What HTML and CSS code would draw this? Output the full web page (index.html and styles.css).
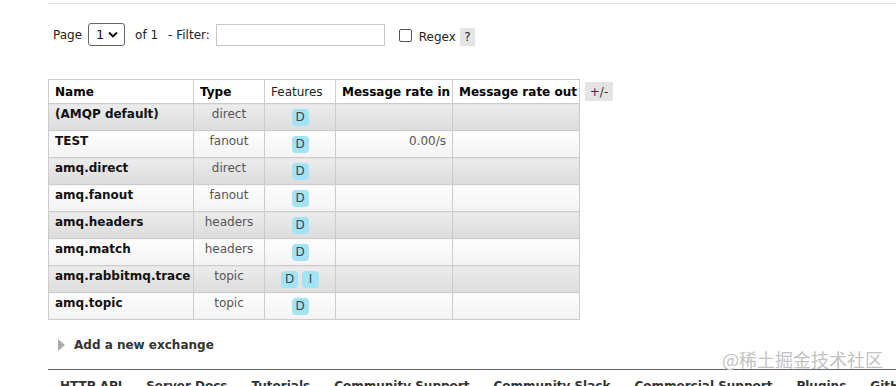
FILE: index.html
```html
<!DOCTYPE html>
<html>
<head>
<meta charset="utf-8">
<title>Exchanges</title>
<link rel="stylesheet" href="styles.css">
</head>
<body>
<div class="main">
  <div class="rule-top"></div>
  <div class="filter-bar">
    <span class="lbl">Page</span>
    <span class="select">1 <svg width="10" height="7" viewBox="0 0 10 7"><path d="M1 1.5 L5 5.5 L9 1.5" fill="none" stroke="#111" stroke-width="1.8"/></svg></span>
    <span class="lbl of">of 1</span>
    <span class="lbl">- Filter:</span>
    <span class="input"></span>
    <span class="check"></span>
    <span class="lbl regex">Regex</span>
    <span class="help">?</span>
  </div>
  <div class="table-wrap">
    <table class="list">
      <colgroup>
        <col class="w-name"><col class="w-type"><col class="w-feat"><col class="w-in"><col class="w-out">
      </colgroup>
      <thead>
        <tr>
          <th>Name</th>
          <th>Type</th>
          <th class="c-feat">Features</th>
          <th>Message rate in</th>
          <th>Message rate out</th>
        </tr>
      </thead>
      <tbody>
        <tr class="alt1"><td class="c-name">(AMQP default)</td><td class="c-type">direct</td><td class="c-feat"><span class="badge">D</span></td><td class="c-in"></td><td class="c-out"></td></tr>
        <tr class="alt2"><td class="c-name">TEST</td><td class="c-type">fanout</td><td class="c-feat"><span class="badge">D</span></td><td class="c-in">0.00/s</td><td class="c-out"></td></tr>
        <tr class="alt1"><td class="c-name">amq.direct</td><td class="c-type">direct</td><td class="c-feat"><span class="badge">D</span></td><td class="c-in"></td><td class="c-out"></td></tr>
        <tr class="alt2"><td class="c-name">amq.fanout</td><td class="c-type">fanout</td><td class="c-feat"><span class="badge">D</span></td><td class="c-in"></td><td class="c-out"></td></tr>
        <tr class="alt1"><td class="c-name">amq.headers</td><td class="c-type">headers</td><td class="c-feat"><span class="badge">D</span></td><td class="c-in"></td><td class="c-out"></td></tr>
        <tr class="alt2"><td class="c-name">amq.match</td><td class="c-type">headers</td><td class="c-feat"><span class="badge">D</span></td><td class="c-in"></td><td class="c-out"></td></tr>
        <tr class="alt1"><td class="c-name">amq.rabbitmq.trace</td><td class="c-type">topic</td><td class="c-feat"><span class="badge">D</span><span class="badge">I</span></td><td class="c-in"></td><td class="c-out"></td></tr>
        <tr class="alt2"><td class="c-name">amq.topic</td><td class="c-type">topic</td><td class="c-feat"><span class="badge">D</span></td><td class="c-in"></td><td class="c-out"></td></tr>
      </tbody>
    </table>
    <span class="toggle">+/-</span>
  </div>
  <div class="add-section">
    <svg class="tri" width="7" height="12" viewBox="0 0 7 12"><path d="M0 0 L7 6 L0 12 Z" fill="#aaa"/></svg>
    <span>Add a new exchange</span>
  </div>
  <div class="footer">
    <a>HTTP API</a>
    <a>Server Docs</a>
    <a>Tutorials</a>
    <a>Community Support</a>
    <a>Community Slack</a>
    <a>Commercial Support</a>
    <a>Plugins</a>
    <a>GitHub</a>
  </div>
</div>
<div class="mark">@稀土掘金技术社区</div>
</body>
</html>
```
FILE: styles.css
```css
html, body {
  margin: 0;
  background: #fff;
  font-family: "DejaVu Sans", Verdana, sans-serif;
  font-size: 12px;
  color: #484848;
  overflow: hidden;
}
.main {
  padding-left: 48px;
  padding-top: 3px;
}
.rule-top {
  border-top: 1px solid #e2e2e2;
}
.filter-bar {
  height: 75px;
  display: flex;
  align-items: center;
  padding-left: 5px;
  box-sizing: border-box;
  color: #222;
  padding-bottom: 14px;
}
.select {
  margin-left: 6px;
  width: 37px;
  height: 23px;
  box-sizing: border-box;
  border: 1px solid #666;
  border-radius: 3px;
  display: flex;
  align-items: center;
  justify-content: space-between;
  padding: 0 6px 0 7px;
  font-size: 13px;
  color: #111;
}
.of { margin-left: 10px; }
.of + .lbl { margin-left: 10px; }
.input {
  margin-left: 6px;
  width: 169px;
  height: 22px;
  box-sizing: border-box;
  border: 1px solid #c8c8c8;
}
.check {
  margin-left: 14px;
  margin-top: 2px;
  width: 13px;
  height: 13px;
  box-sizing: border-box;
  border: 1px solid #555;
  border-radius: 2px;
}
.regex { margin-left: 7px; margin-top: 5px; }
.help {
  margin-left: 4px;
  margin-top: 5px;
  width: 15px;
  height: 18px;
  background: #e4e4e4;
  display: flex;
  align-items: center;
  justify-content: center;
}
.table-wrap {
  display: flex;
  align-items: flex-start;
}
.list {
  border-collapse: collapse;
  border: 1px solid #ccc;
  table-layout: fixed;
  width: 531px;
}
.w-name { width: 145px; }
.w-type { width: 71px; }
.w-feat { width: 71px; }
.w-in { width: 117px; }
.w-out { width: 127px; }
.list th, .list td {
  border: 1px solid #ccc;
  padding: 0 6px;
  vertical-align: top;
  white-space: nowrap;
}
.list th {
  height: 24px;
  box-sizing: border-box;
  background: #fff;
  color: #000;
  font-weight: bold;
  text-align: left;
  padding-top: 5px;
}
.list th.c-feat { font-weight: normal; color: #222; }
.list td {
  height: 27px;
  box-sizing: border-box;
  padding-top: 3px;
}
.list td.c-name { font-weight: bold; color: #111; }
.list td.c-type { text-align: center; color: #555; }
.list td.c-feat { text-align: center; padding-top: 5px; }
.list td.c-in { text-align: right; color: #555; }
tr.alt1 td { background: linear-gradient(#ececec, #dcdcdc); }
tr.alt2 td { background: linear-gradient(#fdfdfd, #f3f3f3); }
.badge {
  display: inline-block;
  min-width: 17px;
  height: 17px;
  line-height: 17px;
  border-radius: 4px;
  background: #a3e3f6;
  color: #444;
  text-align: center;
  margin: 0 2px;
}
.toggle {
  margin-left: 5px;
  margin-top: 3px;
  width: 28px;
  height: 19px;
  background: #e4e4e4;
  color: #333;
  display: flex;
  align-items: center;
  justify-content: center;
}
.add-section {
  display: flex;
  align-items: center;
  margin-top: 18px;
  padding-left: 10px;
  height: 14px;
  font-weight: bold;
  color: #333;
}
.add-section .tri { margin-right: 9px; }
.footer {
  margin-top: 17px;
  border-top: 1px solid #666;
  display: flex;
  gap: 24px;
  padding-left: 12px;
  padding-top: 9px;
  font-weight: bold;
  color: #333;
  white-space: nowrap;
}
.mark {
  position: absolute;
  left: 722px;
  top: 346px;
  font-family: "Noto Sans CJK SC", sans-serif;
  font-size: 18px;
  color: #c2c2c2;
}
```
